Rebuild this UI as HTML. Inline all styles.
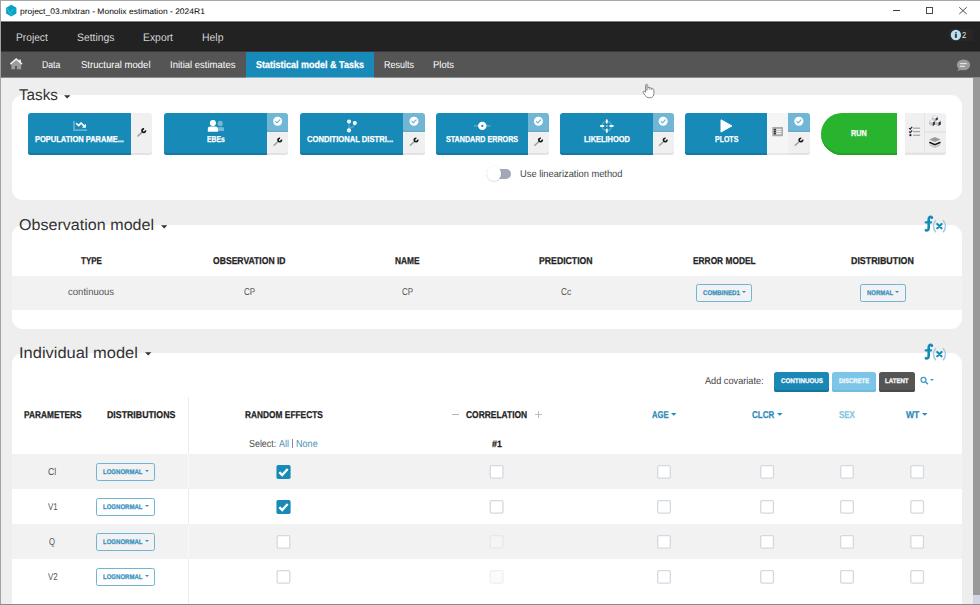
<!DOCTYPE html>
<html>
<head>
<meta charset="utf-8">
<title>project_03.mlxtran - Monolix estimation - 2024R1</title>
<style>
*{box-sizing:border-box;margin:0;padding:0}
html,body{width:980px;height:605px;overflow:hidden;background:#eeeeee;font-family:"Liberation Sans",sans-serif;color:#333}
#win{position:absolute;left:0;top:0;width:980px;height:605px;overflow:hidden;background:#eeeeee}
.t{position:absolute;white-space:nowrap;line-height:1;transform-origin:0 0;display:block}
.b{position:absolute;display:block}
svg{position:absolute;overflow:visible}
</style>
</head>
<body>
<div id="win">
<div class="b" style="left:0px;top:0px;width:980px;height:22px;background:#ffffff;"></div>
<div class="b" style="left:0px;top:0px;width:980px;height:1px;background:#a8a8a8;"></div>
<svg style="left:5px;top:4px" width="13" height="14" viewBox="5 4 13 14"><polygon points="11.3,4.8 16.4,7.8 16.4,13.6 11.3,16.6 6.1,13.6 6.1,7.8" fill="#06a3c7"/><path d="M7.7 8.6 C8.3 11.5 9 13.6 12 14.6 M10.6 12.6 L13.6 9.2" stroke="#5cc5dd" stroke-width="0.7" fill="none" stroke-linecap="round"/></svg>
<span class="t" style="left:20.00px;top:7px;font-size:8.1px;line-height:9px;color:#000;transform:scaleX(1.0483) skewX(0.05deg);">project_03.mlxtran - Monolix estimation - 2024R1</span>
<div class="b" style="left:893px;top:10px;width:7.3px;height:1px;background:#3c3c3c;"></div>
<div class="b" style="left:926px;top:7px;width:7.2px;height:7px;background:transparent;border:1px solid #4a4a4a"></div>
<svg style="left:958px;top:6px" width="10" height="10" viewBox="958 6 10 10"><path d="M959.3 7.3 L966.7 14 M966.7 7.3 L959.3 14" stroke="#2e2e2e" stroke-width="0.85" fill="none"/></svg>
<div class="b" style="left:0px;top:21px;width:980px;height:1px;background:#808080;"></div>
<div class="b" style="left:0px;top:22px;width:980px;height:30px;background:#222222;"></div>
<div class="b" style="left:0px;top:22px;width:980px;height:1px;background:#181818;"></div>
<div class="b" style="left:0px;top:51px;width:980px;height:1px;background:#3a3a3a;"></div>
<span class="t" style="left:15.70px;top:31px;font-size:10.9px;line-height:12px;color:#d4d4d4;transform:scaleX(0.9374) skewX(0.05deg);">Project</span>
<span class="t" style="left:76.50px;top:31px;font-size:10.9px;line-height:12px;color:#d4d4d4;transform:scaleX(0.9521) skewX(0.05deg);">Settings</span>
<span class="t" style="left:143.00px;top:31px;font-size:10.9px;line-height:12px;color:#d4d4d4;transform:scaleX(0.9523) skewX(0.05deg);">Export</span>
<span class="t" style="left:201.50px;top:31px;font-size:10.9px;line-height:12px;color:#d4d4d4;transform:scaleX(0.9590) skewX(0.05deg);">Help</span>
<div class="b" style="left:949px;top:29px;width:24px;height:12px;background:#272727;"></div>
<svg style="left:950px;top:29px" width="12" height="12" viewBox="950 29 12 12"><circle cx="955.9" cy="35" r="5.15" fill="#b9e0f3"/><rect x="954.9" y="33.9" width="2" height="3.9" fill="#3a3a3a"/><rect x="954.9" y="32" width="2" height="1.5" fill="#6a6a6a"/></svg>
<span class="t" style="left:962.00px;top:30px;font-size:8.6px;line-height:10px;color:#e8e8e8;transform:scaleX(0.8781) skewX(0.05deg);">2</span>
<div class="b" style="left:0px;top:52px;width:980px;height:26px;background:#555555;"></div>
<div class="b" style="left:246px;top:52px;width:128px;height:26px;background:#178ab8;"></div>
<div class="b" style="left:0px;top:77px;width:980px;height:1px;background:#8c8c8c;"></div>
<div class="b" style="left:246px;top:77px;width:128px;height:1px;background:#7fb9d3;"></div>
<svg style="left:9px;top:57px" width="15" height="14" viewBox="9 57 15 14"><path d="M11.3 64.3 L16.2 60.2 L21.1 64.3 V69.3 H16.9 V66 H15.1 V69.3 H11.3 Z" fill="#9c9c9c"/><rect x="19.1" y="59.6" width="1.8" height="3" fill="#f0f0f0"/><path d="M10.4 64.1 L16.2 59.1 L22 64.1" stroke="#f4f4f4" stroke-width="1.5" fill="none" stroke-linejoin="miter"/></svg>
<span class="t" style="left:41.70px;top:59px;font-size:10.0px;line-height:11px;color:#ffffff;transform:scaleX(0.8663) skewX(0.05deg);">Data</span>
<span class="t" style="left:80.50px;top:59px;font-size:10.0px;line-height:11px;color:#ffffff;transform:scaleX(0.9545) skewX(0.05deg);">Structural model</span>
<span class="t" style="left:170.00px;top:59px;font-size:10.0px;line-height:11px;color:#ffffff;transform:scaleX(0.9504) skewX(0.05deg);">Initial estimates</span>
<span class="t" style="left:255.50px;top:59px;font-size:10.0px;line-height:11px;font-weight:bold;-webkit-text-stroke:0.25px #ffffff;color:#ffffff;transform:scaleX(0.9010) skewX(0.05deg);">Statistical model &amp; Tasks</span>
<span class="t" style="left:383.50px;top:59px;font-size:10.0px;line-height:11px;color:#ffffff;transform:scaleX(0.8997) skewX(0.05deg);">Results</span>
<span class="t" style="left:433.00px;top:59px;font-size:10.0px;line-height:11px;color:#ffffff;transform:scaleX(0.9446) skewX(0.05deg);">Plots</span>
<svg style="left:955px;top:58px" width="17" height="15" viewBox="955 58 17 15"><ellipse cx="963.5" cy="64.9" rx="6.7" ry="5.4" fill="#9a9a9a"/><path d="M959.5 68.2 L956.9 71 L962 69.8 Z" fill="#9a9a9a"/><rect x="959.8" y="63.1" width="7.1" height="1.1" fill="#ececec"/><rect x="959.8" y="65.8" width="5.1" height="1.1" fill="#ececec"/></svg>
<div class="b" style="left:973px;top:78px;width:7px;height:517px;background:#999999;"></div>
<div class="b" style="left:973px;top:595px;width:7px;height:9px;background:#d2d6e2;"></div>
<div class="b" style="left:12px;top:95px;width:950px;height:105px;background:#ffffff;border-radius:11px"></div>
<div class="b" style="left:12px;top:225px;width:950px;height:104px;background:#ffffff;border-radius:11px"></div>
<div class="b" style="left:12px;top:353px;width:950px;height:260px;background:#fff;border-radius:11px 11px 0 0"></div>
<span class="t" style="left:19.10px;top:86px;font-size:15.6px;line-height:17px;color:#333;transform:scaleX(0.9755) skewX(0.05deg);">Tasks</span>
<svg style="left:64.2px;top:94.5px" width="6.4" height="3.6" viewBox="0 0 2 1"><polygon points="0,0 2,0 1,1" fill="#333"/></svg>
<span class="t" style="left:18.90px;top:216px;font-size:15.6px;line-height:17px;color:#333;transform:scaleX(1.0318) skewX(0.05deg);">Observation model</span>
<svg style="left:160.8px;top:224.5px" width="6.4" height="3.6" viewBox="0 0 2 1"><polygon points="0,0 2,0 1,1" fill="#333"/></svg>
<span class="t" style="left:19.30px;top:344px;font-size:15.6px;line-height:17px;color:#333;transform:scaleX(1.0551) skewX(0.05deg);">Individual model</span>
<svg style="left:145.3px;top:352.2px" width="6.4" height="3.6" viewBox="0 0 2 1"><polygon points="0,0 2,0 1,1" fill="#333"/></svg>
<div class="b" style="left:28px;top:113px;width:103.1px;height:42px;background:#178ab8;border-radius:3px 0 0 3px;box-shadow:inset 0 -2px 0 #1479a3"></div>
<div class="b" style="left:131.1px;top:113px;width:21.3px;height:42px;background:#f0f0f0;border-radius:0 3px 3px 0;box-shadow:inset 0 -2px 0 #e3e3e3"></div>
<svg style="left:135px;top:127px" width="14" height="14" viewBox="135 127 14 14"><path d="M142.45 131.90 L138.05 135.90" stroke="#9d9d9d" stroke-width="1.5" stroke-linecap="round"/><path d="M145.47 130.30 A1.75 1.75 0 1 1 144.05 128.88" stroke="#141414" stroke-width="1.7" fill="none"/></svg>
<span class="t" style="left:35.00px;top:134px;font-size:8.6px;line-height:10px;font-weight:bold;-webkit-text-stroke:0.25px #ffffff;color:#ffffff;transform:scaleX(0.8732) skewX(0.05deg);">POPULATION PARAME...</span>
<div class="b" style="left:164.3px;top:113px;width:102.8px;height:42px;background:#178ab8;border-radius:3px 0 0 3px;box-shadow:inset 0 -2px 0 #1479a3"></div>
<div class="b" style="left:267.1px;top:113px;width:21.3px;height:42px;background:#f0f0f0;border-radius:0 3px 3px 0;box-shadow:inset 0 -2px 0 #e3e3e3"></div>
<div class="b" style="left:267.1px;top:113px;width:21.3px;height:19px;background:#72b6d6;border-radius:0 3px 0 0;box-shadow:inset 0 -1.5px 0 #68aacb"></div>
<svg style="left:272px;top:115px" width="12" height="12" viewBox="272 115 12 12"><circle cx="277.65" cy="121.2" r="4.5" fill="#fff"/><path d="M275.55 121.30 L277.05 122.80 L279.85 119.80" stroke="#6cb3d3" stroke-width="1.15" fill="none" stroke-linecap="round" stroke-linejoin="round"/></svg>
<svg style="left:271px;top:136px" width="14" height="14" viewBox="271 136 14 14"><path d="M278.45 141.30 L274.05 145.30" stroke="#9d9d9d" stroke-width="1.5" stroke-linecap="round"/><path d="M281.47 139.70 A1.75 1.75 0 1 1 280.05 138.28" stroke="#141414" stroke-width="1.7" fill="none"/></svg>
<span class="t" style="left:207.30px;top:134px;font-size:8.6px;line-height:10px;font-weight:bold;-webkit-text-stroke:0.25px #ffffff;color:#ffffff;transform:scaleX(0.7923) skewX(0.05deg);">EBEs</span>
<div class="b" style="left:300px;top:113px;width:103.4px;height:42px;background:#178ab8;border-radius:3px 0 0 3px;box-shadow:inset 0 -2px 0 #1479a3"></div>
<div class="b" style="left:403.4px;top:113px;width:21.3px;height:42px;background:#f0f0f0;border-radius:0 3px 3px 0;box-shadow:inset 0 -2px 0 #e3e3e3"></div>
<div class="b" style="left:403.4px;top:113px;width:21.3px;height:19px;background:#72b6d6;border-radius:0 3px 0 0;box-shadow:inset 0 -1.5px 0 #68aacb"></div>
<svg style="left:408px;top:115px" width="12" height="12" viewBox="408 115 12 12"><circle cx="413.94999999999993" cy="121.2" r="4.5" fill="#fff"/><path d="M411.85 121.30 L413.35 122.80 L416.15 119.80" stroke="#6cb3d3" stroke-width="1.15" fill="none" stroke-linecap="round" stroke-linejoin="round"/></svg>
<svg style="left:407px;top:136px" width="14" height="14" viewBox="407 136 14 14"><path d="M414.75 141.30 L410.35 145.30" stroke="#9d9d9d" stroke-width="1.5" stroke-linecap="round"/><path d="M417.77 139.70 A1.75 1.75 0 1 1 416.35 138.28" stroke="#141414" stroke-width="1.7" fill="none"/></svg>
<span class="t" style="left:306.90px;top:134px;font-size:8.6px;line-height:10px;font-weight:bold;-webkit-text-stroke:0.25px #ffffff;color:#ffffff;transform:scaleX(0.8858) skewX(0.05deg);">CONDITIONAL DISTRI...</span>
<div class="b" style="left:436.1px;top:113px;width:91.8px;height:42px;background:#178ab8;border-radius:3px 0 0 3px;box-shadow:inset 0 -2px 0 #1479a3"></div>
<div class="b" style="left:527.9px;top:113px;width:21.3px;height:42px;background:#f0f0f0;border-radius:0 3px 3px 0;box-shadow:inset 0 -2px 0 #e3e3e3"></div>
<div class="b" style="left:527.9px;top:113px;width:21.3px;height:19px;background:#72b6d6;border-radius:0 3px 0 0;box-shadow:inset 0 -1.5px 0 #68aacb"></div>
<svg style="left:532px;top:115px" width="12" height="12" viewBox="532 115 12 12"><circle cx="538.4499999999999" cy="121.2" r="4.5" fill="#fff"/><path d="M536.35 121.30 L537.85 122.80 L540.65 119.80" stroke="#6cb3d3" stroke-width="1.15" fill="none" stroke-linecap="round" stroke-linejoin="round"/></svg>
<svg style="left:532px;top:136px" width="14" height="14" viewBox="532 136 14 14"><path d="M539.25 141.30 L534.85 145.30" stroke="#9d9d9d" stroke-width="1.5" stroke-linecap="round"/><path d="M542.27 139.70 A1.75 1.75 0 1 1 540.85 138.28" stroke="#141414" stroke-width="1.7" fill="none"/></svg>
<span class="t" style="left:446.00px;top:134px;font-size:8.6px;line-height:10px;font-weight:bold;-webkit-text-stroke:0.25px #ffffff;color:#ffffff;transform:scaleX(0.8306) skewX(0.05deg);">STANDARD ERRORS</span>
<div class="b" style="left:560px;top:113px;width:92.6px;height:42px;background:#178ab8;border-radius:3px 0 0 3px;box-shadow:inset 0 -2px 0 #1479a3"></div>
<div class="b" style="left:652.6px;top:113px;width:21.3px;height:42px;background:#f0f0f0;border-radius:0 3px 3px 0;box-shadow:inset 0 -2px 0 #e3e3e3"></div>
<div class="b" style="left:652.6px;top:113px;width:21.3px;height:19px;background:#72b6d6;border-radius:0 3px 0 0;box-shadow:inset 0 -1.5px 0 #68aacb"></div>
<svg style="left:657px;top:115px" width="12" height="12" viewBox="657 115 12 12"><circle cx="663.15" cy="121.2" r="4.5" fill="#fff"/><path d="M661.05 121.30 L662.55 122.80 L665.35 119.80" stroke="#6cb3d3" stroke-width="1.15" fill="none" stroke-linecap="round" stroke-linejoin="round"/></svg>
<svg style="left:656px;top:136px" width="14" height="14" viewBox="656 136 14 14"><path d="M663.95 141.30 L659.55 145.30" stroke="#9d9d9d" stroke-width="1.5" stroke-linecap="round"/><path d="M666.97 139.70 A1.75 1.75 0 1 1 665.55 138.28" stroke="#141414" stroke-width="1.7" fill="none"/></svg>
<span class="t" style="left:583.60px;top:134px;font-size:8.6px;line-height:10px;font-weight:bold;-webkit-text-stroke:0.25px #ffffff;color:#ffffff;transform:scaleX(0.8674) skewX(0.05deg);">LIKELIHOOD</span>
<div class="b" style="left:684.7px;top:113px;width:82.3px;height:42px;background:#178ab8;border-radius:3px 0 0 3px;box-shadow:inset 0 -2px 0 #1479a3"></div>
<div class="b" style="left:767.0px;top:113px;width:21.3px;height:42px;background:#f5f5f5;box-shadow:inset 0 -2px 0 #e8e8e8"></div>
<div class="b" style="left:788.3px;top:113px;width:21.3px;height:42px;background:#f0f0f0;border-radius:0 3px 3px 0;box-shadow:inset 0 -2px 0 #e3e3e3"></div>
<div class="b" style="left:788.3px;top:113px;width:21.3px;height:19px;background:#72b6d6;border-radius:0 3px 0 0;box-shadow:inset 0 -1.5px 0 #68aacb"></div>
<svg style="left:793px;top:115px" width="12" height="12" viewBox="793 115 12 12"><circle cx="798.8499999999999" cy="121.2" r="4.5" fill="#fff"/><path d="M796.75 121.30 L798.25 122.80 L801.05 119.80" stroke="#6cb3d3" stroke-width="1.15" fill="none" stroke-linecap="round" stroke-linejoin="round"/></svg>
<svg style="left:792px;top:136px" width="14" height="14" viewBox="792 136 14 14"><path d="M799.65 141.30 L795.25 145.30" stroke="#9d9d9d" stroke-width="1.5" stroke-linecap="round"/><path d="M802.67 139.70 A1.75 1.75 0 1 1 801.25 138.28" stroke="#141414" stroke-width="1.7" fill="none"/></svg>
<span class="t" style="left:714.60px;top:134px;font-size:8.6px;line-height:10px;font-weight:bold;-webkit-text-stroke:0.25px #ffffff;color:#ffffff;transform:scaleX(0.8127) skewX(0.05deg);">PLOTS</span>
<svg style="left:72px;top:120px" width="16" height="12" viewBox="72 120 16 12"><path d="M74 121.1 V130.05 H87" stroke="#62b1d3" stroke-width="1.75" fill="none"/><path d="M76.6 123.7 L78.7 125.6 L81 123 L84.2 126.2" stroke="#fff" stroke-width="1.7" fill="none" stroke-linejoin="round" stroke-linecap="round"/><polygon points="85.9,123.7 85.9,127.7 81.9,127.7" fill="#fff"/></svg>
<svg style="left:206px;top:119px" width="20" height="14" viewBox="206 119 20 14"><circle cx="220.2" cy="123.4" r="2.6" fill="#74b9d8"/><path d="M217.5 130.9 V129.1 a2 2 0 0 1 2 -2 H222.1 a2 2 0 0 1 2 2 V130.9 Z" fill="#74b9d8"/><circle cx="212.9" cy="123.1" r="3.05" fill="#fff"/><path d="M207.8 131.85 V129 a2.4 2.4 0 0 1 2.4 -2.4 H215.6 a2.4 2.4 0 0 1 2.4 2.4 V131.85 Z" fill="#fff"/></svg>
<svg style="left:345px;top:118px" width="14" height="16" viewBox="345 118 14 16"><path d="M349 121.5 V130.4 M349 127.9 C352.5 127.9 354.8 127 354.8 123.1" stroke="#4ea6cb" stroke-width="1.4" fill="none"/><circle cx="349" cy="121.45" r="2.05" fill="#fff"/><circle cx="354.8" cy="123.1" r="2.05" fill="#fff"/><circle cx="349" cy="130.4" r="2.05" fill="#fff"/><rect x="348.1" y="121.2" width="1.8" height="0.6" fill="#9fd0e4"/><rect x="353.9" y="122.8" width="1.8" height="0.6" fill="#9fd0e4"/><rect x="348.1" y="130.1" width="1.8" height="0.6" fill="#9fd0e4"/></svg>
<svg style="left:472px;top:120px" width="20" height="12" viewBox="472 120 20 12"><rect x="473.7" y="125.2" width="16.9" height="1.4" rx="0.5" fill="#62b1d3"/><circle cx="482.3" cy="125.9" r="4.2" fill="#fff"/><circle cx="482.3" cy="125.9" r="1.15" fill="#178ab8"/></svg>
<svg style="left:598px;top:117px" width="18" height="18" viewBox="598 117 18 18"><circle cx="606.8" cy="126" r="4.7" stroke="#62b1d3" stroke-width="1.2" fill="none"/><path d="M606.8 120.1 V122.7 M606.8 129.3 V131.9 M600.9 126 H603.4 M610.2 126 H612.8" stroke="#fff" stroke-width="1.8" stroke-linecap="round"/><rect x="606" y="125.2" width="1.6" height="1.6" fill="#a6d3e6"/></svg>
<svg style="left:719px;top:118px" width="15" height="16" viewBox="719 118 15 16"><path d="M721 119.8 L731.9 125.9 L721 132 Z" fill="#fff" stroke="#fff" stroke-width="1" stroke-linejoin="round"/></svg>
<svg style="left:771px;top:126px" width="13" height="11" viewBox="771 126 13 11"><rect x="772.3" y="126.9" width="10.7" height="9.3" rx="0.6" fill="#a9a9a9"/><rect x="773.9" y="128.9" width="2" height="1.4" fill="#2b2b3a"/><rect x="773.9" y="130.9" width="2" height="1.4" fill="#2b2b3a"/><rect x="773.9" y="132.9" width="2" height="1.4" fill="#2b2b3a"/><rect x="776.3" y="128.9" width="5.1" height="1.4" fill="#efefef"/><rect x="776.3" y="130.9" width="5.1" height="1.4" fill="#efefef"/><rect x="776.3" y="132.9" width="5.1" height="1.4" fill="#efefef"/></svg>
<div class="b" style="left:820.7px;top:113px;width:76.5px;height:42px;background:#28b42e;border-radius:21px 0 0 21px;box-shadow:inset 0 -2px 0 #23a129"></div>
<span class="t" style="left:851.40px;top:128px;font-size:8.6px;line-height:10px;font-weight:bold;-webkit-text-stroke:0.25px #ffffff;color:#ffffff;transform:scaleX(0.8426) skewX(0.05deg);">RUN</span>
<div class="b" style="left:905px;top:113px;width:40.5px;height:42px;background:#f0f0f0;border-radius:0 3px 3px 0;box-shadow:inset 0 -2.5px 0 #e3e3e3"></div>
<div class="b" style="left:924px;top:113px;width:1px;height:40px;background:#e4e4e4;"></div>
<div class="b" style="left:925px;top:131.4px;width:20.5px;height:2px;background:#e5e5e5;"></div>
<svg style="left:908px;top:125px" width="14" height="13" viewBox="908 125 14 13"><rect x="913.1" y="127.6" width="7" height="1.1" fill="#9a9a9a"/><rect x="913.1" y="131.1" width="7" height="1.1" fill="#9a9a9a"/><rect x="913.1" y="134.7" width="7" height="1.1" fill="#9a9a9a"/><path d="M909.1 128 L910.2 129.2 L912.2 126.8" stroke="#1c1c2a" stroke-width="1.1" fill="none"/><path d="M909.1 131.5 L910.2 132.7 L912.2 130.3" stroke="#1c1c2a" stroke-width="1.1" fill="none"/><circle cx="910.4" cy="135.2" r="1.1" fill="#1c1c2a"/></svg>
<svg style="left:927px;top:114px" width="16" height="14" viewBox="927 114 16 14"><path d="M931.9 117.2 L934.9 115.7 L937.9 117.2 L934.9 118.7 Z" fill="#fbfbfb" stroke="#b8b8b8" stroke-width="0.5"/><path d="M931.9 117.2 L935.6 119.0 V122.10000000000001 L931.9 120.4 Z" fill="#c6c6c6"/><path d="M937.9 117.2 L935.6 118.5 V121.9 L937.9 120.4 Z" fill="#2b2b3c"/><path d="M929.1 121.3 L932.1 119.8 L935.1 121.3 L932.1 122.8 Z" fill="#fbfbfb" stroke="#b8b8b8" stroke-width="0.5"/><path d="M929.1 121.3 L932.8000000000001 123.1 V126.2 L929.1 124.5 Z" fill="#c6c6c6"/><path d="M935.1 121.3 L932.8000000000001 122.6 V126.0 L935.1 124.5 Z" fill="#2b2b3c"/><path d="M934.8 121.3 L937.8 119.8 L940.8 121.3 L937.8 122.8 Z" fill="#fbfbfb" stroke="#b8b8b8" stroke-width="0.5"/><path d="M934.8 121.3 L938.5 123.1 V126.2 L934.8 124.5 Z" fill="#c6c6c6"/><path d="M940.8 121.3 L938.5 122.6 V126.0 L940.8 124.5 Z" fill="#2b2b3c"/></svg>
<svg style="left:928px;top:135px" width="14" height="14" viewBox="928 135 14 14"><path d="M929.7 144.8 L934.9 147.1 L940.1 144.8" stroke="#c4c4c4" stroke-width="1.5" fill="none" stroke-linejoin="miter"/><path d="M929.3 142.2 L934.9 144.7 L940.5 142.2" stroke="#15151d" stroke-width="1.6" fill="none" stroke-linejoin="miter"/><polygon points="934.9,136.9 940.6,139.4 934.9,141.9 929.2,139.4" fill="#9b9b9b"/></svg>
<div class="b" style="left:492px;top:169px;width:19px;height:10px;background:#a2a9b5;border-radius:5px"></div>
<div class="b" style="left:486.6px;top:166.4px;width:14.2px;height:14.2px;background:#ffffff;border-radius:50%;box-shadow:0 0.5px 1.5px rgba(0,0,0,0.22)"></div>
<span class="t" style="left:520.20px;top:168px;font-size:9.9px;line-height:11px;color:#444;transform:scaleX(0.9425) skewX(0.05deg);">Use linearization method</span>
<svg style="left:924px;top:214px" width="24" height="20" viewBox="924 214 24 20"><g transform="translate(0 0)"><path d="M931.9 217.7 C930.9 216.5 928.7 216.5 928.7 219.6 V228 C928.7 230.5 927 230.7 925.9 230.2" stroke="#178ab8" stroke-width="2.6" fill="none" stroke-linecap="round"/><path d="M925.7 222.4 H931" stroke="#178ab8" stroke-width="2.2" fill="none" stroke-linecap="round"/><path d="M935.9 220.2 Q930.9 226.2 935.9 232.3 M943 220.2 Q948 226.2 943 232.3" stroke="#9ccfe6" stroke-width="1.5" fill="none"/><path d="M937.2 223.9 L941.6 228.3 M941.6 223.9 L937.2 228.3" stroke="#178ab8" stroke-width="2.1" fill="none" stroke-linecap="round"/></g></svg>
<svg style="left:924px;top:342.3px" width="24" height="20" viewBox="924 342.3 24 20"><g transform="translate(0 128.3)"><path d="M931.9 217.7 C930.9 216.5 928.7 216.5 928.7 219.6 V228 C928.7 230.5 927 230.7 925.9 230.2" stroke="#178ab8" stroke-width="2.6" fill="none" stroke-linecap="round"/><path d="M925.7 222.4 H931" stroke="#178ab8" stroke-width="2.2" fill="none" stroke-linecap="round"/><path d="M935.9 220.2 Q930.9 226.2 935.9 232.3 M943 220.2 Q948 226.2 943 232.3" stroke="#9ccfe6" stroke-width="1.5" fill="none"/><path d="M937.2 223.9 L941.6 228.3 M941.6 223.9 L937.2 228.3" stroke="#178ab8" stroke-width="2.1" fill="none" stroke-linecap="round"/></g></svg>
<div class="b" style="left:12px;top:276px;width:950px;height:34px;background:#f2f2f2;"></div>
<span class="t" style="left:80.50px;top:255px;font-size:9.9px;line-height:11px;font-weight:bold;-webkit-text-stroke:0.25px #222;color:#222;transform:scaleX(0.8121) skewX(0.05deg);">TYPE</span>
<span class="t" style="left:213.00px;top:255px;font-size:9.9px;line-height:11px;font-weight:bold;-webkit-text-stroke:0.25px #222;color:#222;transform:scaleX(0.8701) skewX(0.05deg);">OBSERVATION ID</span>
<span class="t" style="left:395.25px;top:255px;font-size:9.9px;line-height:11px;font-weight:bold;-webkit-text-stroke:0.25px #222;color:#222;transform:scaleX(0.8491) skewX(0.05deg);">NAME</span>
<span class="t" style="left:539.25px;top:255px;font-size:9.9px;line-height:11px;font-weight:bold;-webkit-text-stroke:0.25px #222;color:#222;transform:scaleX(0.8804) skewX(0.05deg);">PREDICTION</span>
<span class="t" style="left:693.00px;top:255px;font-size:9.9px;line-height:11px;font-weight:bold;-webkit-text-stroke:0.25px #222;color:#222;transform:scaleX(0.8451) skewX(0.05deg);">ERROR MODEL</span>
<span class="t" style="left:851.25px;top:255px;font-size:9.9px;line-height:11px;font-weight:bold;-webkit-text-stroke:0.25px #222;color:#222;transform:scaleX(0.8949) skewX(0.05deg);">DISTRIBUTION</span>
<span class="t" style="left:68.00px;top:286px;font-size:9.9px;line-height:11px;color:#555;transform:scaleX(0.9658) skewX(0.05deg);">continuous</span>
<span class="t" style="left:243.75px;top:286px;font-size:9.9px;line-height:11px;color:#555;transform:scaleX(0.8180) skewX(0.05deg);">CP</span>
<span class="t" style="left:402.00px;top:286px;font-size:9.9px;line-height:11px;color:#555;transform:scaleX(0.8180) skewX(0.05deg);">CP</span>
<span class="t" style="left:561.00px;top:286px;font-size:9.9px;line-height:11px;color:#555;transform:scaleX(0.8471) skewX(0.05deg);">Cc</span>
<div class="b" style="left:696.2px;top:284.25px;width:55.9px;height:17.5px;background:transparent;border:1.1px solid #70b5d5;border-radius:2.3px"></div>
<span class="t" style="left:702.80px;top:289px;font-size:6.7px;line-height:7px;font-weight:bold;-webkit-text-stroke:0.25px #3590be;color:#3590be;transform:scaleX(0.9178) skewX(0.05deg);">COMBINED1</span>
<svg style="left:742.1px;top:290.85px" width="4" height="2.2" viewBox="0 0 2 1"><polygon points="0,0 2,0 1,1" fill="#3590be"/></svg>
<div class="b" style="left:859.9px;top:284.25px;width:45.8px;height:17.5px;background:transparent;border:1.1px solid #70b5d5;border-radius:2.3px"></div>
<span class="t" style="left:866.60px;top:289px;font-size:6.7px;line-height:7px;font-weight:bold;-webkit-text-stroke:0.25px #3590be;color:#3590be;transform:scaleX(0.8911) skewX(0.05deg);">NORMAL</span>
<svg style="left:895.1px;top:290.85px" width="4" height="2.2" viewBox="0 0 2 1"><polygon points="0,0 2,0 1,1" fill="#3590be"/></svg>
<div class="b" style="left:12px;top:454px;width:950px;height:35px;background:#f2f2f2;"></div>
<div class="b" style="left:12px;top:524px;width:950px;height:35px;background:#f2f2f2;"></div>
<div class="b" style="left:188px;top:397px;width:1px;height:220px;background:rgba(255,255,255,0.55);"></div>
<div class="b" style="left:188px;top:397px;width:1px;height:57px;background:#ececec;"></div>
<div class="b" style="left:188px;top:489px;width:1px;height:35px;background:#ececec;"></div>
<div class="b" style="left:188px;top:559px;width:1px;height:46px;background:#ececec;"></div>
<span class="t" style="left:705.00px;top:375px;font-size:9.9px;line-height:11px;color:#444;transform:scaleX(0.9283) skewX(0.05deg);">Add covariate:</span>
<div class="b" style="left:774.25px;top:372px;width:55px;height:19.6px;background:#1a87b5;border-radius:2.5px;box-shadow:inset 0 -2px 0 #14749c"></div>
<span class="t" style="left:780.75px;top:377px;font-size:6.7px;line-height:7px;font-weight:bold;-webkit-text-stroke:0.25px #fff;color:#fff;transform:scaleX(0.9325) skewX(0.05deg);">CONTINUOUS</span>
<div class="b" style="left:832.3px;top:372px;width:43.5px;height:19.6px;background:#7cc5e6;border-radius:2.5px;box-shadow:inset 0 -2px 0 #73bbdb"></div>
<span class="t" style="left:838.60px;top:377px;font-size:6.7px;line-height:7px;font-weight:bold;-webkit-text-stroke:0.25px #f4fbfe;color:#f4fbfe;transform:scaleX(0.8944) skewX(0.05deg);">DISCRETE</span>
<div class="b" style="left:878.5px;top:372px;width:36.4px;height:19.6px;background:#555555;border-radius:2.5px;box-shadow:inset 0 -2px 0 #4a4a4a"></div>
<span class="t" style="left:884.80px;top:377px;font-size:6.7px;line-height:7px;font-weight:bold;-webkit-text-stroke:0.25px #fff;color:#fff;transform:scaleX(0.9102) skewX(0.05deg);">LATENT</span>
<svg style="left:919px;top:375px" width="11" height="11" viewBox="919 375 11 11"><circle cx="923.5" cy="379.8" r="2.5" stroke="#3a9aca" stroke-width="1.2" fill="none"/><path d="M925.4 381.7 L927.5 383.8" stroke="#3a9aca" stroke-width="1.5" stroke-linecap="round"/></svg>
<svg style="left:929.6px;top:379.4px" width="3.9" height="2" viewBox="0 0 2 1"><polygon points="0,0 2,0 1,1" fill="#3a9aca"/></svg>
<span class="t" style="left:23.75px;top:409px;font-size:9.9px;line-height:11px;font-weight:bold;-webkit-text-stroke:0.25px #222;color:#222;transform:scaleX(0.8422) skewX(0.05deg);">PARAMETERS</span>
<span class="t" style="left:106.75px;top:409px;font-size:9.9px;line-height:11px;font-weight:bold;-webkit-text-stroke:0.25px #222;color:#222;transform:scaleX(0.8896) skewX(0.05deg);">DISTRIBUTIONS</span>
<span class="t" style="left:244.50px;top:409px;font-size:9.9px;line-height:11px;font-weight:bold;-webkit-text-stroke:0.25px #222;color:#222;transform:scaleX(0.8442) skewX(0.05deg);">RANDOM EFFECTS</span>
<span class="t" style="left:466.25px;top:409px;font-size:9.9px;line-height:11px;font-weight:bold;-webkit-text-stroke:0.25px #222;color:#222;transform:scaleX(0.8523) skewX(0.05deg);">CORRELATION</span>
<div class="b" style="left:452.3px;top:414px;width:6.6px;height:1px;background:#b4b4b4;"></div>
<div class="b" style="left:535.4px;top:414px;width:6.4px;height:1px;background:#bdbdbd;"></div>
<div class="b" style="left:538px;top:411.4px;width:1px;height:6.4px;background:#bdbdbd;"></div>
<span class="t" style="left:651.50px;top:409px;font-size:9.9px;line-height:11px;font-weight:bold;-webkit-text-stroke:0.25px #2d8ab8;color:#2d8ab8;transform:scaleX(0.7808) skewX(0.05deg);">AGE</span>
<svg style="left:671.25px;top:413.2px" width="5.5" height="2.8" viewBox="0 0 2 1"><polygon points="0,0 2,0 1,1" fill="#2d8ab8"/></svg>
<span class="t" style="left:751.75px;top:409px;font-size:9.9px;line-height:11px;font-weight:bold;-webkit-text-stroke:0.25px #2d8ab8;color:#2d8ab8;transform:scaleX(0.8092) skewX(0.05deg);">CLCR</span>
<svg style="left:776.75px;top:413.2px" width="5.5" height="2.8" viewBox="0 0 2 1"><polygon points="0,0 2,0 1,1" fill="#2d8ab8"/></svg>
<span class="t" style="left:839.25px;top:409px;font-size:9.9px;line-height:11px;font-weight:bold;-webkit-text-stroke:0.25px #85c6e2;color:#85c6e2;transform:scaleX(0.8051) skewX(0.05deg);">SEX</span>
<span class="t" style="left:906.40px;top:409px;font-size:9.9px;line-height:11px;font-weight:bold;-webkit-text-stroke:0.25px #2d8ab8;color:#2d8ab8;transform:scaleX(0.8706) skewX(0.05deg);">WT</span>
<svg style="left:922px;top:413.2px" width="5.5" height="2.8" viewBox="0 0 2 1"><polygon points="0,0 2,0 1,1" fill="#2d8ab8"/></svg>
<span class="t" style="left:249.10px;top:438px;font-size:10.2px;line-height:11px;color:#4a4a4a;transform:scaleX(0.8723) skewX(0.05deg);">Select:</span>
<span class="t" style="left:279.20px;top:438px;font-size:10.2px;line-height:11px;color:#4b93ba;transform:scaleX(0.8733) skewX(0.05deg);">All</span>
<div class="b" style="left:291.8px;top:439px;width:1.1px;height:9.4px;background:#a57aa8;"></div>
<span class="t" style="left:296.00px;top:438px;font-size:10.2px;line-height:11px;color:#4b93ba;transform:scaleX(0.8899) skewX(0.05deg);">None</span>
<span class="t" style="left:491.90px;top:439px;font-size:9.2px;line-height:10px;font-weight:bold;-webkit-text-stroke:0.25px #222;color:#222;transform:scaleX(0.9576) skewX(0.05deg);">#1</span>
<span class="t" style="left:48.25px;top:466px;font-size:9.9px;line-height:11px;color:#555;transform:scaleX(0.8824) skewX(0.05deg);">Cl</span>
<div class="b" style="left:96.3px;top:463.25px;width:58.9px;height:17.5px;background:transparent;border:1.1px solid #70b5d5;border-radius:2.3px"></div>
<span class="t" style="left:103.10px;top:468px;font-size:6.7px;line-height:7px;font-weight:bold;-webkit-text-stroke:0.25px #3590be;color:#3590be;transform:scaleX(0.8994) skewX(0.05deg);">LOGNORMAL</span>
<svg style="left:144.6px;top:469.9px" width="4" height="2.2" viewBox="0 0 2 1"><polygon points="0,0 2,0 1,1" fill="#3590be"/></svg>
<svg style="left:274px;top:463px" width="18" height="18" viewBox="274 463 18 18"><rect x="276.45" y="464.90" width="14.15" height="14.15" rx="1.8" fill="#178ab8"/><path d="M279.3 472.20 L282.2 475.00 L287.7 469.00" stroke="#fff" stroke-width="2.3" fill="none"/></svg>
<svg style="left:488px;top:463px" width="18" height="18" viewBox="488 463 18 18"><rect x="490.25" y="465.60" width="12.7" height="12.6" rx="1.4" fill="#ffffff" stroke="#d3d9e1" stroke-width="1.3"/></svg>
<svg style="left:655px;top:463px" width="18" height="18" viewBox="655 463 18 18"><rect x="657.65" y="465.60" width="12.7" height="12.6" rx="1.4" fill="#ffffff" stroke="#d3d9e1" stroke-width="1.3"/></svg>
<svg style="left:758px;top:463px" width="18" height="18" viewBox="758 463 18 18"><rect x="760.75" y="465.60" width="12.7" height="12.6" rx="1.4" fill="#ffffff" stroke="#d3d9e1" stroke-width="1.3"/></svg>
<svg style="left:838px;top:463px" width="18" height="18" viewBox="838 463 18 18"><rect x="840.65" y="465.60" width="12.7" height="12.6" rx="1.4" fill="#ffffff" stroke="#d3d9e1" stroke-width="1.3"/></svg>
<svg style="left:908px;top:463px" width="18" height="18" viewBox="908 463 18 18"><rect x="910.80" y="465.60" width="12.7" height="12.6" rx="1.4" fill="#ffffff" stroke="#d3d9e1" stroke-width="1.3"/></svg>
<span class="t" style="left:47.50px;top:501px;font-size:9.9px;line-height:11px;color:#555;transform:scaleX(0.8051) skewX(0.05deg);">V1</span>
<div class="b" style="left:96.3px;top:498.25px;width:58.9px;height:17.5px;background:transparent;border:1.1px solid #70b5d5;border-radius:2.3px"></div>
<span class="t" style="left:103.10px;top:503px;font-size:6.7px;line-height:7px;font-weight:bold;-webkit-text-stroke:0.25px #3590be;color:#3590be;transform:scaleX(0.8994) skewX(0.05deg);">LOGNORMAL</span>
<svg style="left:144.6px;top:504.9px" width="4" height="2.2" viewBox="0 0 2 1"><polygon points="0,0 2,0 1,1" fill="#3590be"/></svg>
<svg style="left:274px;top:498px" width="18" height="18" viewBox="274 498 18 18"><rect x="276.45" y="499.90" width="14.15" height="14.15" rx="1.8" fill="#178ab8"/><path d="M279.3 507.20 L282.2 510.00 L287.7 504.00" stroke="#fff" stroke-width="2.3" fill="none"/></svg>
<svg style="left:488px;top:498px" width="18" height="18" viewBox="488 498 18 18"><rect x="490.25" y="500.60" width="12.7" height="12.6" rx="1.4" fill="#ffffff" stroke="#d3d9e1" stroke-width="1.3"/></svg>
<svg style="left:655px;top:498px" width="18" height="18" viewBox="655 498 18 18"><rect x="657.65" y="500.60" width="12.7" height="12.6" rx="1.4" fill="#ffffff" stroke="#d3d9e1" stroke-width="1.3"/></svg>
<svg style="left:758px;top:498px" width="18" height="18" viewBox="758 498 18 18"><rect x="760.75" y="500.60" width="12.7" height="12.6" rx="1.4" fill="#ffffff" stroke="#d3d9e1" stroke-width="1.3"/></svg>
<svg style="left:838px;top:498px" width="18" height="18" viewBox="838 498 18 18"><rect x="840.65" y="500.60" width="12.7" height="12.6" rx="1.4" fill="#ffffff" stroke="#d3d9e1" stroke-width="1.3"/></svg>
<svg style="left:908px;top:498px" width="18" height="18" viewBox="908 498 18 18"><rect x="910.80" y="500.60" width="12.7" height="12.6" rx="1.4" fill="#ffffff" stroke="#d3d9e1" stroke-width="1.3"/></svg>
<span class="t" style="left:49.00px;top:536px;font-size:9.9px;line-height:11px;color:#555;transform:scaleX(0.7792) skewX(0.05deg);">Q</span>
<div class="b" style="left:96.3px;top:533.25px;width:58.9px;height:17.5px;background:transparent;border:1.1px solid #70b5d5;border-radius:2.3px"></div>
<span class="t" style="left:103.10px;top:538px;font-size:6.7px;line-height:7px;font-weight:bold;-webkit-text-stroke:0.25px #3590be;color:#3590be;transform:scaleX(0.8994) skewX(0.05deg);">LOGNORMAL</span>
<svg style="left:144.6px;top:539.9px" width="4" height="2.2" viewBox="0 0 2 1"><polygon points="0,0 2,0 1,1" fill="#3590be"/></svg>
<svg style="left:274px;top:533px" width="18" height="18" viewBox="274 533 18 18"><rect x="277.15" y="535.60" width="12.7" height="12.6" rx="1.4" fill="#ffffff" stroke="#d3d9e1" stroke-width="1.3"/></svg>
<svg style="left:488px;top:533px" width="18" height="18" viewBox="488 533 18 18"><rect x="490.25" y="535.60" width="12.7" height="12.6" rx="1.4" fill="#f5f5f5" stroke="#e6e8eb" stroke-width="1.3"/></svg>
<svg style="left:655px;top:533px" width="18" height="18" viewBox="655 533 18 18"><rect x="657.65" y="535.60" width="12.7" height="12.6" rx="1.4" fill="#ffffff" stroke="#d3d9e1" stroke-width="1.3"/></svg>
<svg style="left:758px;top:533px" width="18" height="18" viewBox="758 533 18 18"><rect x="760.75" y="535.60" width="12.7" height="12.6" rx="1.4" fill="#ffffff" stroke="#d3d9e1" stroke-width="1.3"/></svg>
<svg style="left:838px;top:533px" width="18" height="18" viewBox="838 533 18 18"><rect x="840.65" y="535.60" width="12.7" height="12.6" rx="1.4" fill="#ffffff" stroke="#d3d9e1" stroke-width="1.3"/></svg>
<svg style="left:908px;top:533px" width="18" height="18" viewBox="908 533 18 18"><rect x="910.80" y="535.60" width="12.7" height="12.6" rx="1.4" fill="#ffffff" stroke="#d3d9e1" stroke-width="1.3"/></svg>
<span class="t" style="left:47.60px;top:571px;font-size:9.9px;line-height:11px;color:#555;transform:scaleX(0.8093) skewX(0.05deg);">V2</span>
<div class="b" style="left:96.3px;top:568.25px;width:58.9px;height:17.5px;background:transparent;border:1.1px solid #70b5d5;border-radius:2.3px"></div>
<span class="t" style="left:103.10px;top:573px;font-size:6.7px;line-height:7px;font-weight:bold;-webkit-text-stroke:0.25px #3590be;color:#3590be;transform:scaleX(0.8994) skewX(0.05deg);">LOGNORMAL</span>
<svg style="left:144.6px;top:574.9px" width="4" height="2.2" viewBox="0 0 2 1"><polygon points="0,0 2,0 1,1" fill="#3590be"/></svg>
<svg style="left:274px;top:568px" width="18" height="18" viewBox="274 568 18 18"><rect x="277.15" y="570.60" width="12.7" height="12.6" rx="1.4" fill="#ffffff" stroke="#d3d9e1" stroke-width="1.3"/></svg>
<svg style="left:488px;top:568px" width="18" height="18" viewBox="488 568 18 18"><rect x="490.25" y="570.60" width="12.7" height="12.6" rx="1.4" fill="#fbfbfb" stroke="#eef0f2" stroke-width="1.3"/></svg>
<svg style="left:655px;top:568px" width="18" height="18" viewBox="655 568 18 18"><rect x="657.65" y="570.60" width="12.7" height="12.6" rx="1.4" fill="#ffffff" stroke="#d3d9e1" stroke-width="1.3"/></svg>
<svg style="left:758px;top:568px" width="18" height="18" viewBox="758 568 18 18"><rect x="760.75" y="570.60" width="12.7" height="12.6" rx="1.4" fill="#ffffff" stroke="#d3d9e1" stroke-width="1.3"/></svg>
<svg style="left:838px;top:568px" width="18" height="18" viewBox="838 568 18 18"><rect x="840.65" y="570.60" width="12.7" height="12.6" rx="1.4" fill="#ffffff" stroke="#d3d9e1" stroke-width="1.3"/></svg>
<svg style="left:908px;top:568px" width="18" height="18" viewBox="908 568 18 18"><rect x="910.80" y="570.60" width="12.7" height="12.6" rx="1.4" fill="#ffffff" stroke="#d3d9e1" stroke-width="1.3"/></svg>
<svg style="left:642px;top:83px" width="13" height="16" viewBox="642 83 13 16"><path d="M645.5 92.3 V85.5 Q645.5 84.3 646.6 84.3 Q647.7 84.3 647.7 85.5 V87.4 L649.7 87.7 L651.6 88.3 L653.4 89.1 Q653.9 89.3 653.9 90 V93.5 Q653.9 96.6 651.5 97.7 H648 Q646.5 97.4 645 95.2 L643.3 92.8 Q642.7 91.6 643.8 91.2 Q644.6 91 645.5 92.3 Z" fill="#fff" stroke="#6a6a72" stroke-width="0.8" stroke-linejoin="round"/><rect x="645.9" y="85" width="1.4" height="6" fill="#b8b8be"/><path d="M647.7 87.4 V90 M649.7 87.7 V90 M651.6 88.3 V90.2" stroke="#85858c" stroke-width="0.7"/></svg>
<div class="b" style="left:0px;top:0px;width:1px;height:605px;background:#a2a2a2;"></div>
<div class="b" style="left:0px;top:604px;width:980px;height:1px;background:#8a8a8a;"></div>
</div>
</body>
</html>
